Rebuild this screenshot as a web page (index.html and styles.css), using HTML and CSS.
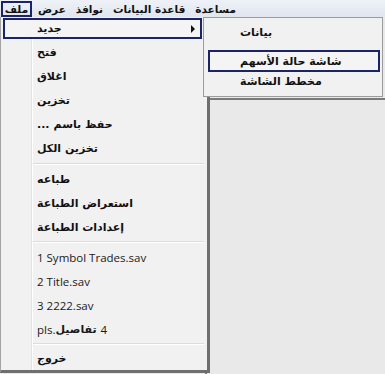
FILE: index.html
```html
<!DOCTYPE html>
<html lang="ar">

<head>
    <meta charset="UTF-8">
    <meta name="viewport" content="width=device-width, initial-scale=1.0">
    <title>ملف</title>
    <link rel="stylesheet" href="styles.css">
</head>

<body>
    <div class="app">
        <div class="menubar">
            <span class="top-item active">ملف</span>
            <span class="top-item">عرض</span>
            <span class="top-item">نوافذ</span>
            <span class="top-item">قاعدة البيانات</span>
            <span class="top-item">مساعدة</span>
        </div>

        <div class="toolbar-space"></div>
        <div class="client"></div>

        <!-- قائمة ملف -->
        <div class="menu">
            <div class="item current"><span>جديد</span><span class="arrow"></span></div>
            <div class="item"><span>فتح</span></div>
            <div class="item"><span>اغلاق</span></div>
            <div class="item"><span>تخزين</span></div>
            <div class="item"><span>...</span><span class="after-dots">حفظ باسم</span></div>
            <div class="item"><span>تخزين الكل</span></div>
            <div class="sep first"></div>
            <div class="item"><span>طباعه</span></div>
            <div class="item"><span>استعراض الطباعة</span></div>
            <div class="item"><span>إعدادات الطباعة</span></div>
            <div class="sep"></div>
            <div class="item file"><span>1 Symbol Trades.sav</span></div>
            <div class="item file"><span>2 Title.sav</span></div>
            <div class="item file"><span>3 2222.sav</span></div>
            <div class="item file"><span>pls.</span><b>تفاصيل</b><span class="num">4</span></div>
            <div class="sep"></div>
            <div class="item last"><span>خروج</span></div>
        </div>

        <!-- القائمة الفرعية جديد -->
        <div class="submenu">
            <div class="sub-item first">بيانات</div>
            <div class="sub-item current">شاشة حالة الأسهم</div>
            <div class="sub-item last">مخطط الشاشة</div>
        </div>
    </div>
</body>

</html>
```

FILE: styles.css
```css
body {
    margin: 0;
    background-color: #e9e9e9;
    font-family: "DejaVu Sans", sans-serif;
    color: #111;
}

.app {
    position: relative;
    width: 385px;
    height: 374px;
    overflow: hidden;
    background-color: #e9e9e9;
}

.menubar {
    display: flex;
    align-items: center;
    height: 17px;
    background: linear-gradient(#eef2f8, #e0e5ee);
    font-size: 10.5px;
    font-weight: bold;
}

.top-item {
    margin-right: 10px;
    white-space: nowrap;
}

.top-item.active {
    box-sizing: border-box;
    width: 31px;
    height: 16px;
    margin-left: 1px;
    margin-right: 6px;
    border: 2px solid #1c2468;
    line-height: 12px;
    text-align: center;
}

.toolbar-space {
    height: 81px;
}

.client {
    height: 274px;
    margin-left: 205px;
    border-top: 2px solid #7a7a7a;
    border-left: 2px solid #7a7a7a;
    background-color: #e9e9e9;
}

.menu {
    position: absolute;
    left: 0;
    top: 17px;
    width: 210px;
    box-sizing: border-box;
    border-left: 1px solid #a3a3a3;
    border-right: 3px solid #6f6f6f;
    border-bottom: 3px solid #6f6f6f;
    background: linear-gradient(to right, #f1f1f1 0 30px, #e2e3e3 30px 31px, #ffffff 31px 32px, #f1f1f1 32px);
    font-size: 11px;
    font-weight: bold;
}

.item {
    display: flex;
    align-items: center;
    height: 24px;
    padding-left: 36px;
    white-space: nowrap;
}

.item.current {
    box-sizing: border-box;
    height: 21px;
    margin: 1px 5px 1px 2px;
    padding-left: 32px;
    border: 2px solid #1c2468;
    background-color: #f4f4f4;
}

.item.last {
    height: 23px;
}

.after-dots {
    margin-left: 4px;
}

.item.file {
    font-family: "Open Sans", sans-serif;
    font-size: 11.5px;
    font-weight: normal;
    color: #1a1a1a;
}

.item.file b {
    font-family: "DejaVu Sans", sans-serif;
    font-size: 11px;
}

.num {
    margin-left: 4px;
}

.arrow {
    margin-left: auto;
    margin-right: 5px;
    width: 0;
    height: 0;
    border-top: 4px solid transparent;
    border-bottom: 4px solid transparent;
    border-left: 4px solid #111;
}

.sep {
    height: 6px;
    margin-left: 32px;
    margin-right: 3px;
    display: flex;
    flex-direction: column;
    justify-content: center;
}

.sep.first {
    height: 7px;
}

.sep::before {
    content: "";
    display: block;
    border-top: 1px solid #dcdcdc;
    border-bottom: 1px solid #ffffff;
}

.submenu {
    position: absolute;
    left: 203px;
    top: 17px;
    width: 180px;
    height: 80px;
    box-sizing: border-box;
    border: 1px solid #9c9c9c;
    background-color: #f1f1f1;
    font-size: 11px;
    font-weight: bold;
}

.sub-item {
    display: flex;
    align-items: center;
    height: 24px;
    padding-left: 36px;
    white-space: nowrap;
}

.sub-item.first {
    margin-top: 2px;
}

.sub-item.current {
    box-sizing: border-box;
    height: 22px;
    margin: 6px 2px 0 4px;
    padding-left: 30px;
    border: 2px solid #1c2468;
    background-color: #f4f4f4;
}

.sub-item.last {
    height: 18px;
}
```
